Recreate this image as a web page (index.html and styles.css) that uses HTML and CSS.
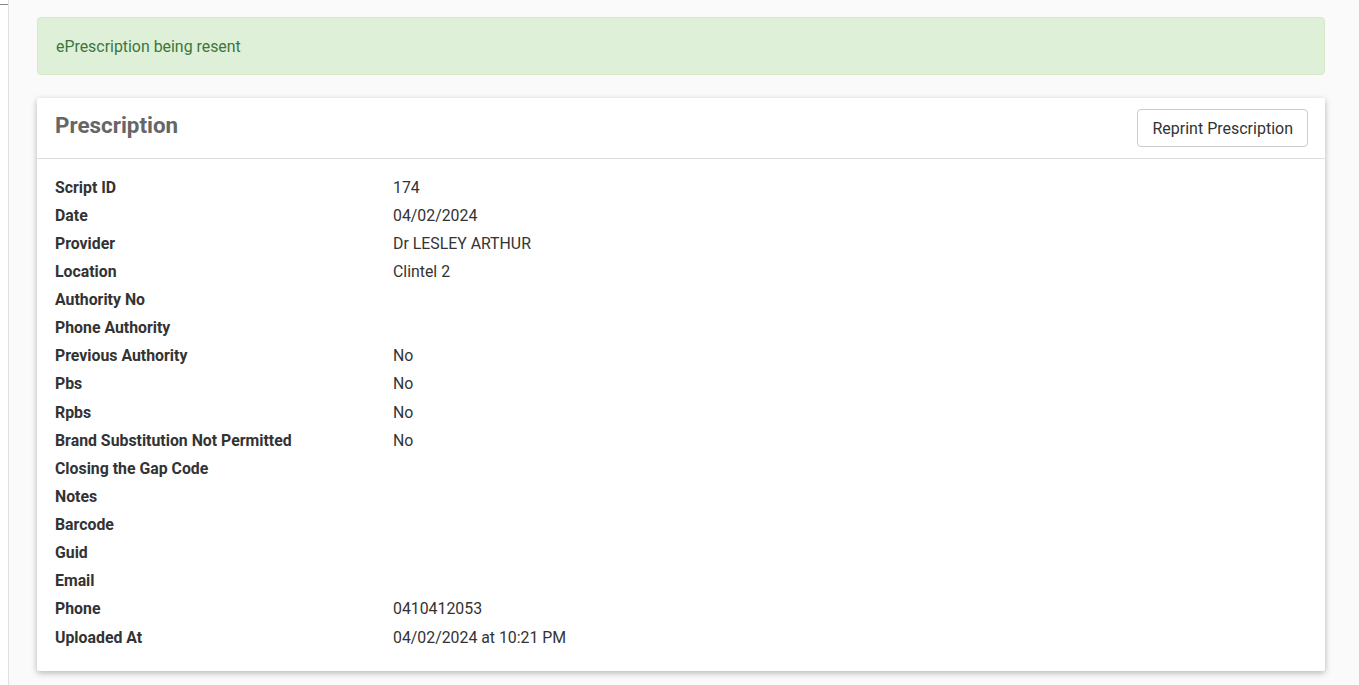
FILE: index.html
```html
<!DOCTYPE html>
<html>
<head>
<meta charset="utf-8">
<link rel="stylesheet" href="styles.css">
</head>
<body>
<div class="layout">
  <aside class="sidebar"><div class="sidebar-tick"></div></aside>
  <main class="main">
    <div class="alert">ePrescription being resent</div>
    <section class="card">
      <header class="card-header">
        <h2 class="card-title">Prescription</h2>
        <button class="btn">Reprint Prescription</button>
      </header>
      <div class="card-body">
        <dl class="details">
          <dt>Script ID</dt><dd>174</dd>
          <dt>Date</dt><dd>04/02/2024</dd>
          <dt>Provider</dt><dd>Dr LESLEY ARTHUR</dd>
          <dt>Location</dt><dd>Clintel 2</dd>
          <dt>Authority No</dt><dd></dd>
          <dt>Phone Authority</dt><dd></dd>
          <dt>Previous Authority</dt><dd>No</dd>
          <dt>Pbs</dt><dd>No</dd>
          <dt>Rpbs</dt><dd>No</dd>
          <dt>Brand Substitution Not Permitted</dt><dd>No</dd>
          <dt>Closing the Gap Code</dt><dd></dd>
          <dt>Notes</dt><dd></dd>
          <dt>Barcode</dt><dd></dd>
          <dt>Guid</dt><dd></dd>
          <dt>Email</dt><dd></dd>
          <dt>Phone</dt><dd>0410412053</dd>
          <dt>Uploaded At</dt><dd>04/02/2024 at 10:21 PM</dd>
        </dl>
      </div>
    </section>
  </main>
</div>
</body>
</html>
```
FILE: styles.css
```css
* { box-sizing: border-box; }
html, body { margin: 0; padding: 0; height: 100%; }
body {
  font-family: Roboto, "Liberation Sans", sans-serif;
  color: #333;
  background: #fafafa;
  overflow: hidden;
}
.layout {
  display: flex;
  min-height: 685px;
}
.sidebar {
  width: 9px;
  flex: 0 0 9px;
  background: #fff;
  border-right: 1px solid #e0e0e0;
  padding-top: 4px;
}
.sidebar-tick {
  height: 1px;
  width: 8px;
  background: #888;
}
.main {
  flex: 1;
  padding: 17px 34px 14px 28px;
}
.alert {
  background: #dff0d8;
  border: 1px solid #d6e9c6;
  color: #3c763d;
  border-radius: 4px;
  height: 58px;
  padding: 0 18px;
  display: flex;
  align-items: center;
  font-size: 15.9px;
  margin-bottom: 23px;
}
.card {
  background: #fff;
  border-radius: 2px;
  box-shadow: 0 2px 6px rgba(0,0,0,0.28);
}
.card-header {
  height: 61px;
  border-bottom: 1px solid #ddd;
  display: flex;
  align-items: center;
  justify-content: space-between;
  padding: 0 17px 0 18px;
}
.card-title {
  margin: 0;
  font-size: 22.4px;
  font-weight: 700;
  color: #666;
  position: relative;
  top: -3px;
}
.btn {
  font-family: Roboto, "Liberation Sans", sans-serif;
  font-size: 16px;
  color: #333;
  background: #fff;
  border: 1px solid #ccc;
  border-radius: 4px;
  height: 38px;
  padding: 0 14px;
  position: relative;
  top: 0;
}
.card-body {
  padding: 14px 17px 20px 18px;
}
.details {
  margin: 0;
  display: grid;
  grid-template-columns: 338px 1fr;
  grid-auto-rows: 28.125px;
  align-items: center;
  font-size: 15.85px;
}
.details dt {
  font-weight: 700;
  color: #333;
}
.details dd {
  margin: 0;
  color: #333;
}
```
